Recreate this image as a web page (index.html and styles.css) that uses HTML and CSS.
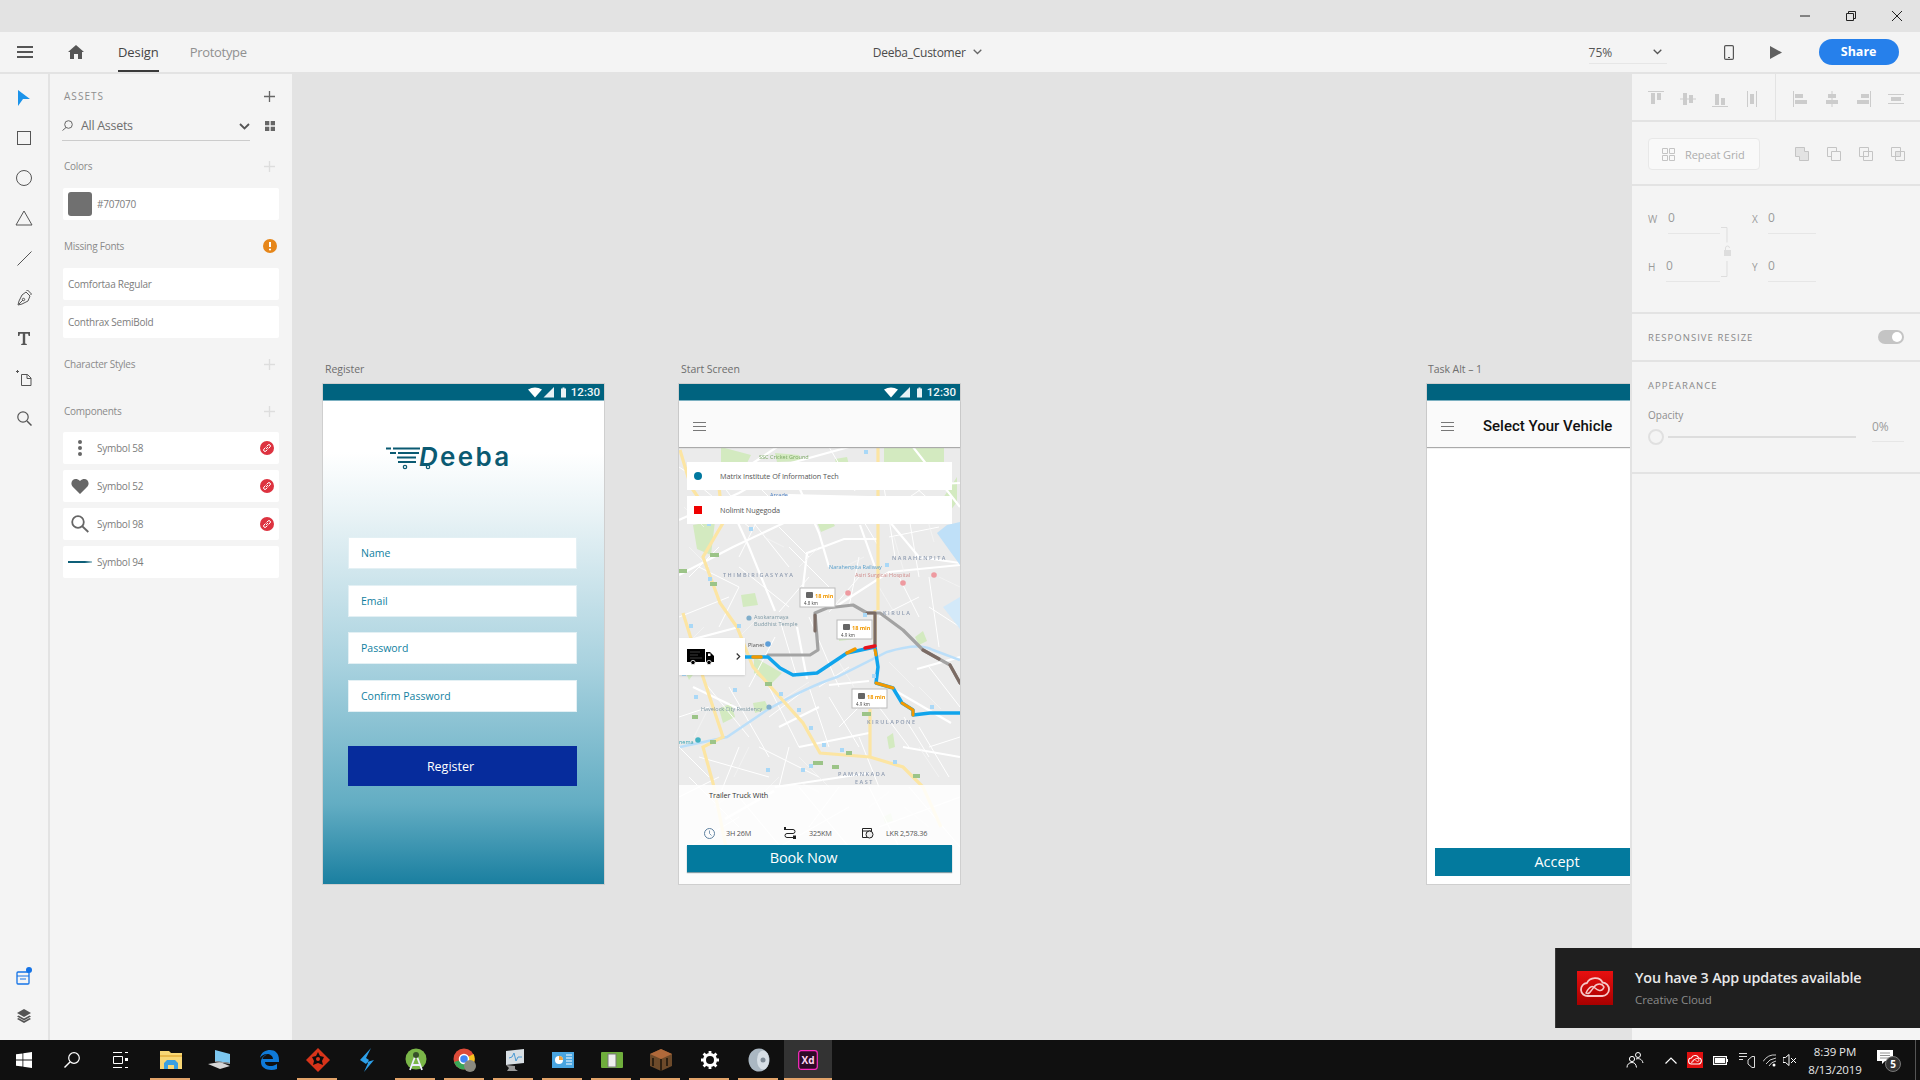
FILE: index.html
```html
<!DOCTYPE html>
<html lang="en">
<head>
<meta charset="utf-8">
<title>Deeba_Customer - Adobe XD</title>
<link rel="stylesheet" href="styles.css">
</head>
<body>
<div class="titlebar">
  <svg class="win-ctl" width="12" height="12" viewBox="0 0 12 12"><path d="M1 6h10" stroke="#222" fill="none"/></svg>
  <svg class="win-ctl" width="12" height="12" viewBox="0 0 12 12"><path d="M1.500 3.500h7v7h-7zM3.500 3.500v-2h7v7h-2" stroke="#222" fill="none"/></svg>
  <svg class="win-ctl" width="12" height="12" viewBox="0 0 12 12"><path d="M1 1l10 10M11 1L1 11" stroke="#222" fill="none"/></svg>
</div>
<header class="appbar">
  <svg class="ham" width="16" height="12" viewBox="0 0 16 12"><path d="M0 1h16M0 6h16M0 11h16" stroke="#555" stroke-width="2"/></svg>
  <svg class="home" width="16" height="14" viewBox="0 0 16 14"><path d="M8 0l8 7h-2v7H10V9H6v5H2V7H0z" fill="#555"/></svg>
  <div class="tab tab-on">Design</div>
  <div class="tab tab-off">Prototype</div>
  <div class="doc">Deeba_Customer<svg width="9" height="6" viewBox="0 0 9 6"><path d="M.7.7l3.800 3.800L8.300.7" stroke="#666" stroke-width="1.300" fill="none"/></svg></div>
  <div class="zoom"><span>75%</span><svg width="9" height="6" viewBox="0 0 9 6"><path d="M.7.7l3.800 3.800L8.300.7" stroke="#555" stroke-width="1.300" fill="none"/></svg></div>
  <svg class="phone" width="10" height="15" viewBox="0 0 10 15"><rect x=".6" y=".6" width="8.800" height="13.800" rx="1.200" fill="none" stroke="#555" stroke-width="1.200"/><rect x="4" y="12" width="2" height="1" fill="#555"/></svg>
  <svg class="play" width="12" height="13" viewBox="0 0 12 13"><path d="M0 0l12 6.500L0 13z" fill="#606060"/></svg>
  <div class="share">Share</div>
</header>
<div class="workspace">
  <nav class="tools">
    <svg width="12" height="16" viewBox="0 0 12 16"><path d="M0 0l12 9-7 0-5 7z" fill="#1b93ea"/></svg>
    <svg width="14" height="14" viewBox="0 0 14 14"><rect x=".5" y=".5" width="13" height="13" fill="none" stroke="#555"/></svg>
    <svg width="16" height="16" viewBox="0 0 16 16"><circle cx="8" cy="8" r="7.500" fill="none" stroke="#555"/></svg>
    <svg width="18" height="16" viewBox="0 0 18 16"><path d="M9 1l8 14H1z" fill="none" stroke="#555"/></svg>
    <svg width="15" height="15" viewBox="0 0 15 15"><path d="M.5 14.500l14-14" stroke="#555" fill="none"/></svg>
    <svg width="15" height="16" viewBox="0 0 15 16"><path d="M9 2l4 4-2 5-6 3-4 1 1-4 3-6zM9.500 1l1-1 4 4-1 1M2 14l4-4" fill="none" stroke="#555"/><circle cx="6.500" cy="9.500" r="1.200" fill="none" stroke="#555"/></svg>
    <svg width="12" height="13" viewBox="0 0 12 13"><path d="M0 0h12v4h-1.300L10 1.800H7.200v9.800l1.600.4V13H3.200v-1l1.600-.4V1.800H2L1.300 4H0z" fill="#555"/></svg>
    <svg width="16" height="16" viewBox="0 0 16 16"><path d="M5.500 4.500h6l3.500 3.500v7.500H5.500zM11 4.500v4h4M0 1.500h3M1.500 0v3" fill="none" stroke="#555"/></svg>
    <svg width="15" height="15" viewBox="0 0 15 15"><circle cx="6" cy="6" r="5.200" fill="none" stroke="#555" stroke-width="1.200"/><path d="M10 10l4.500 4.500" stroke="#555" stroke-width="1.500"/></svg>
    <svg class="tool-bottom" width="16" height="18" viewBox="0 0 16 18"><rect x="1" y="5" width="12" height="12" rx="1" fill="none" stroke="#1473e6" stroke-width="1.300"/><path d="M1 9h12M4 12h6" stroke="#1473e6"/><circle cx="13" cy="3" r="3" fill="#1473e6"/></svg>
    <svg class="tool-layers" width="14" height="14" viewBox="0 0 14 14"><path d="M7 0l7 4-7 4-7-4z" fill="#555"/><path d="M1.500 6.500L0 7.500l7 4 7-4-1.500-1-5.500 3zM1.500 9L0 10l7 4 7-4-1.500-1-5.500 3z" fill="#555"/></svg>
  </nav>
  <aside class="assets">
    <div class="assets-head"><span class="caps">ASSETS</span><svg width="11" height="11" viewBox="0 0 11 11"><path d="M5.500 0v11M0 5.500h11" stroke="#666" stroke-width="1.300"/></svg></div>
    <div class="search-row">
      <div class="search">
        <svg width="11" height="11" viewBox="0 0 11 11"><circle cx="6.500" cy="4.500" r="3.800" fill="none" stroke="#666"/><path d="M4 7.500L.5 10.500" stroke="#666"/></svg>
        <span>All Assets</span>
        <svg class="search-chev" width="11" height="7" viewBox="0 0 11 7"><path d="M1 1l4.500 4.500L10 1" stroke="#555" stroke-width="1.800" fill="none"/></svg>
      </div>
      <svg width="10" height="10" viewBox="0 0 10 10"><path d="M0 0h4.300v4.300H0zM5.700 0H10v4.300H5.700zM0 5.700h4.300V10H0zM5.700 5.700H10V10H5.700z" fill="#666"/></svg>
    </div>
    <div class="sec sec-colors"><span>Colors</span><svg width="11" height="11" viewBox="0 0 11 11"><path d="M5.500 0v11M0 5.500h11" stroke="#ddd" stroke-width="1.300"/></svg></div>
    <div class="card"><i class="swatch"></i><span>#707070</span></div>
    <div class="sec sec-fonts"><span>Missing Fonts</span><svg width="14" height="14" viewBox="0 0 14 14"><circle cx="7" cy="7" r="7" fill="#e68619"/><path d="M7 3v5" stroke="#fff" stroke-width="2"/><circle cx="7" cy="10.500" r="1.100" fill="#fff"/></svg></div>
    <div class="cards">
      <div class="card card-font">Comfortaa Regular</div>
      <div class="card card-font">Conthrax SemiBold</div>
    </div>
    <div class="sec sec-char"><span>Character Styles</span><svg width="11" height="11" viewBox="0 0 11 11"><path d="M5.500 0v11M0 5.500h11" stroke="#ddd" stroke-width="1.300"/></svg></div>
    <div class="sec sec-comp"><span>Components</span><svg width="11" height="11" viewBox="0 0 11 11"><path d="M5.500 0v11M0 5.500h11" stroke="#ddd" stroke-width="1.300"/></svg></div>
    <div class="cards">
      <div class="card"><span class="thumb"><svg width="4" height="16" viewBox="0 0 4 16"><circle cx="2" cy="2" r="2" fill="#666"/><circle cx="2" cy="8" r="2" fill="#666"/><circle cx="2" cy="14" r="2" fill="#666"/></svg></span><span>Symbol 58</span><svg class="link" width="14" height="14" viewBox="0 0 14 14"><circle cx="7" cy="7" r="7" fill="#dd3340"/><path d="M6 8l2-2M5.500 6.500L4 8a1.400 1.400 0 0 0 2 2l1.500-1.500M8.500 7.500L10 6a1.400 1.400 0 0 0-2-2L6.500 5.500" stroke="#fff" fill="none"/></svg></div>
      <div class="card"><span class="thumb"><svg width="18" height="16" viewBox="0 0 18 16"><path d="M9 16L1.500 8.500C-2 4 3.500-2 9 3c5.500-5 11 1 7.500 5.500z" fill="#666"/></svg></span><span>Symbol 52</span><svg class="link" width="14" height="14" viewBox="0 0 14 14"><circle cx="7" cy="7" r="7" fill="#dd3340"/><path d="M6 8l2-2M5.500 6.500L4 8a1.400 1.400 0 0 0 2 2l1.500-1.500M8.500 7.500L10 6a1.400 1.400 0 0 0-2-2L6.500 5.500" stroke="#fff" fill="none"/></svg></div>
      <div class="card"><span class="thumb"><svg width="18" height="18" viewBox="0 0 18 18"><circle cx="7" cy="7" r="5.800" fill="none" stroke="#666" stroke-width="1.800"/><path d="M11 11l6.300 6" stroke="#666" stroke-width="1.800"/></svg></span><span>Symbol 98</span><svg class="link" width="14" height="14" viewBox="0 0 14 14"><circle cx="7" cy="7" r="7" fill="#dd3340"/><path d="M6 8l2-2M5.500 6.500L4 8a1.400 1.400 0 0 0 2 2l1.500-1.500M8.500 7.500L10 6a1.400 1.400 0 0 0-2-2L6.500 5.500" stroke="#fff" fill="none"/></svg></div>
      <div class="card"><span class="thumb"><i class="thumb-line"></i></span><span>Symbol 94</span></div>
    </div>
  </aside>
  <main class="canvas">
    <div class="board-label board-label-a">Register</div>
    <div class="board-label board-label-b">Start Screen</div>
    <div class="board-label board-label-c">Task Alt – 1</div>

    <section class="board board-a">
      <div class="status"><svg width="40" height="11" viewBox="0 0 40 11"><path d="M0 2.500Q7-1.500 14 2.500L7 10.500z" fill="#fff"/><path d="M15.500 10.500L26 0v10.500z" fill="#e8f2f5"/><path d="M33 1.500h1.500v-1h2v1H38v9h-5z" fill="#e8f2f5"/></svg><span>12:30</span></div>
      <div class="logo">
        <svg class="logo-mark" width="48" height="24" viewBox="0 0 48 24"><path d="M0 2.500h5M7 2.500h27M4 7h6M12 7h21M11 11.500h19M12 16h18" stroke="#0b5a72" stroke-width="2" fill="none"/><circle cx="19" cy="21" r="1.700" fill="none" stroke="#0b5a72" stroke-width="1.200"/><circle cx="42" cy="21" r="1.700" fill="none" stroke="#0b5a72" stroke-width="1.200"/></svg>
        <span><em>D</em>eeba</span>
      </div>
      <div class="form">
        <div class="field">Name</div>
        <div class="field">Email</div>
        <div class="field">Password</div>
        <div class="field">Confirm Password</div>
        <div class="register">Register</div>
      </div>
    </section>

    <section class="board board-b">
      <div class="status"><svg width="40" height="11" viewBox="0 0 40 11"><path d="M0 2.500Q7-1.500 14 2.500L7 10.500z" fill="#fff"/><path d="M15.500 10.500L26 0v10.500z" fill="#e8f2f5"/><path d="M33 1.500h1.500v-1h2v1H38v9h-5z" fill="#e8f2f5"/></svg><span>12:30</span></div>
      <div class="nav"><svg width="13" height="9" viewBox="0 0 13 9"><path d="M0 .5h13M0 4.500h13M0 8.500h13" stroke="#777"/></svg></div>
      <div class="map">
        <svg class="map-art" width="281" height="437" viewBox="0 0 281 437">
          <rect width="281" height="437" fill="#ebebeb"/>
          <g fill="#d3eac0">
            <path d="M14 78l22-4-4 34-14-6zM136 70l12-5 8 14-14 6zM62 148l14-2 3 12-15 2zM205 0h60v24l-40 8-20-6zM258 60l20-30v25l-14 18zM75 210l14 8 14 8-12 12-16-12zM160 184l14-2 2 10-16 2zM74 256l12-2 4 8-14 4zM40 262l12-6 4 14-12 6zM236 190l8-6 4 10-8 4zM42 0l30 8-6 12-24-4zM96 6l24 2 2 6-24 1zM2 215l14 10-6 8zM156 12l12-2 2 8-12 2zM204 370l8-4 2 8-8 2zM208 290l6-4 2 14-6 2z"/>
          </g>
          <g fill="none" stroke="#fff" stroke-width="2.200">
            <path d="M0 73L60 46 112 16 170 0M44 76L110 48 190 50M0 128L54 100 130 64M124 140L128 106 165 92 199 92M156 160L210 125 281 118M50 56L70 100 96 164M120 40L140 86 150 120M205 68L240 110 281 116M181 78L196 120M62 24L98 0M234 0L281 60"/>
            <path d="M199 40L281 36M0 196L60 180M118 180L128 232M210 240L272 276M96 340L190 326M120 300L190 286M46 372L95 344M150 238L190 234M224 300L281 310M14 240L60 262M238 222L281 210M100 280L140 260"/>
          </g>
          <g fill="none" stroke="#fff" stroke-width="1">
            <path d="M10 30L70 80M30 20L60 60M150 0L176 44M170 50L200 100M205 40L216 110M216 60L260 30M230 70L240 130M250 130L260 200M130 170L160 240M100 170L118 230M20 120L60 140M60 120L110 160M0 170L50 150M80 70L60 110M110 100L150 140M180 110L170 160M220 130L240 170M250 160L281 180"/>
            <path d="M26 236L70 290M50 240L90 310M90 240L120 300M130 240L150 300M150 250L180 300M200 260L230 300M240 280L270 330M80 300L140 330M20 310L90 330M10 330L60 380M60 350L110 410M120 340L170 400M190 340L230 420M230 340L281 400M0 270L30 260M90 270L130 240M160 280L190 250M0 350L40 330M100 400L170 360M200 380L281 350M10 400L60 370"/>
            <path d="M0 20L30 40M70 30L100 60M100 80L130 110M150 60L190 70M210 90L260 80M60 140L40 180M20 190L50 220M96 190L70 240M140 240L170 220M200 170L240 150M150 165L180 130M250 220L281 260M225 270L250 310M180 290L200 340M110 300L100 340M60 300L40 350M0 300L30 330M160 340L130 380M250 300L281 290M70 70L110 120M130 130L100 165M40 100L10 130M236 40L270 70"/>
          </g>
          <g fill="none" stroke="#f7f7f7" stroke-width=".7">
            <path d="M5 60L25 80M10 100L30 120M85 90L105 100M120 120L140 100M165 120L185 110M215 90L225 125M245 60L255 95M260 130L281 140M200 140L215 165M160 215L175 240M210 215L235 240M240 240L262 262M100 255L130 235M70 300L55 330M120 310L150 340M30 260L15 290M5 200L25 180M60 190L80 170M260 330L240 300M210 345L190 360M140 345L120 335M80 350L100 330M35 360L55 345M225 360L250 380"/>
          </g>
          <path d="M1 300L48 290 88 263Q128 240 158 230L208 205Q240 195 254 203L281 213" fill="none" stroke="#bcdff9" stroke-width="2.500"/>
          <path d="M258 86L268 78 281 75V118L268 100z" fill="#bfe0f8"/>
          <path d="M264 160l17-10v32z" fill="#d3e9f9"/>
          <g fill="none" stroke="#fce5a3" stroke-width="3.200">
            <path d="M1 3L12 40 30 66 44 76 24 110 41 156 58 180 74 220 124 276 141 306 191 310 224 320 244 340 262 380"/>
            <path d="M199 0V163M196 163V200M191 262V310M4 166L24 230 44 290 24 300 34 336 51 420"/>
            <path d="M44 76L40 40"/>
          </g>
          <g fill="none" stroke-linejoin="round" stroke-linecap="round">
            <path d="M89 208H131L139 203 136 166 148 161 174 158 188 166H201L224 183 244 203 271 218 281 236" stroke="#a3a3a3" stroke-width="3.200"/>
            <path d="M136 168V184M188 166H196V198M244 203L260 212M271 218L281 236" stroke="#7b6b64" stroke-width="3.200"/>
            <path d="M66 210H89L101 221 114 228 138 226 168 206 196 200 199 220 197 236 214 241 223 256 234 263V268L251 266H281" stroke="#10a4ec" stroke-width="3.500"/>
            <path d="M74 210H82M168 206L176 202" stroke="#f29900" stroke-width="3.500"/>
            <path d="M186 201L196 199" stroke="#e8121b" stroke-width="3.500"/>
            <path d="M196 203L197 208M197 236L214 241M223 256L234 263V268" stroke="#f29900" stroke-width="3"/>
          </g>
          <g class="map-town">
            <text x="44" y="130">THIMBIRIGASYAYA</text>
            <text x="213" y="113">NARAHENPITA</text>
            <text x="188" y="277">KIRULAPONE</text>
            <text x="159" y="329">PAMANKADA</text>
            <text x="176" y="337">EAST</text>
            <text x="204" y="168">KIRULA</text>
          </g>
          <g class="map-poi">
            <text x="80" y="12" fill="#7ba764">SSC Cricket Ground</text>
            <text x="91" y="50" fill="#4a7fc4">Arcade</text>
            <text x="150" y="122" fill="#5aa0cc">Narahenpita Railway</text>
            <text x="176" y="130" fill="#d08d8c">Asiri Surgical Hospital</text>
            <text x="75" y="172" fill="#7f9aa6">Asokaramaya</text>
            <text x="75" y="179" fill="#7f9aa6">Buddhist Temple</text>
            <text x="22" y="264" fill="#7f9aa6">Havelock City Residency</text>
            <text x="69" y="200" fill="#555">Planet</text>
            <text x="0" y="297" fill="#35a3b3">nema</text>
          </g>
          <g fill="#a9d8f7"><rect x="54" y="241" width="4" height="4"/><rect x="100" y="245" width="4" height="4"/><rect x="118" y="261" width="4" height="4"/><rect x="130" y="279" width="4" height="4"/><rect x="143" y="296" width="4" height="4"/><rect x="161" y="301" width="4" height="4"/><rect x="214" y="313" width="4" height="4"/><rect x="87" y="321" width="4" height="4"/><rect x="122" y="321" width="4" height="4"/><rect x="130" y="317" width="4" height="4"/><rect x="251" y="258" width="4" height="4"/><rect x="184" y="166" width="4" height="4"/><rect x="193" y="227" width="4" height="4"/><rect x="3" y="225" width="4" height="4"/><rect x="10" y="177" width="4" height="4"/><rect x="58" y="177" width="4" height="4"/><rect x="15" y="248" width="4" height="4"/><rect x="28" y="75" width="4" height="4"/><rect x="70" y="80" width="4" height="4"/><rect x="185" y="3" width="4" height="4"/><rect x="206" y="116" width="4" height="4"/><rect x="29" y="130" width="4" height="4"/></g>
          <g fill="#9cc488"><rect x="31" y="106" width="9" height="4"/><rect x="0" y="122" width="8" height="4"/><rect x="31" y="135" width="7" height="4"/><rect x="86" y="235" width="7" height="4"/><rect x="183" y="265" width="9" height="4"/><rect x="13" y="268" width="6" height="4"/><rect x="31" y="293" width="6" height="4"/><rect x="167" y="304" width="6" height="4"/><rect x="134" y="314" width="10" height="4"/><rect x="153" y="318" width="7" height="4"/><rect x="234" y="327" width="7" height="4"/></g>
          <g fill="#ee9aa0"><circle cx="169" cy="146" r="2.800"/><circle cx="224" cy="136" r="2.800"/><circle cx="255" cy="128" r="2.800"/></g>
          <g fill="#80aecb"><circle cx="70" cy="171" r="2.600"/><circle cx="90" cy="260" r="2.600"/></g>
          <circle cx="89" cy="197" r="2.800" fill="#5d9ed8"/>
          <circle cx="19" cy="293" r="2.800" fill="#45b3c3"/>
          <g class="callout">
            <rect x="121" y="141" width="35" height="19" fill="#fff" stroke="#bbb"/><rect x="127" y="145" width="7" height="6" rx="1" fill="#666"/><text class="callout-time" x="136" y="151">18 min</text><text class="callout-km" x="125" y="158">4.8 km</text>
            <rect x="158" y="173" width="35" height="19" fill="#fff" stroke="#bbb"/><rect x="164" y="177" width="7" height="6" rx="1" fill="#666"/><text class="callout-time" x="173" y="183">18 min</text><text class="callout-km" x="162" y="190">4.9 km</text>
            <rect x="173" y="242" width="35" height="19" fill="#fff" stroke="#bbb"/><rect x="179" y="246" width="7" height="6" rx="1" fill="#666"/><text class="callout-time" x="188" y="252">18 min</text><text class="callout-km" x="177" y="259">4.9 km</text>
          </g>
        </svg>
        <div class="place place-a"><i class="dot"></i><span>Matrix Institute Of Information Tech</span></div>
        <div class="place place-b"><i class="sq"></i><span>Nolimit Nugegoda</span></div>
        <div class="truck">
          <svg width="27" height="16" viewBox="0 0 27 16"><path d="M0 0h18v13H0zM19 3h4l4 4v6h-8z" fill="#000"/><path d="M3 3h10M3 6h8M3 9h12" stroke="#666" stroke-width=".6"/><rect x="21" y="4.500" width="2.500" height="2.500" fill="#fff"/><circle cx="6" cy="13.500" r="2.200" fill="#000" stroke="#fff" stroke-width=".8"/><circle cx="22" cy="13.500" r="2.200" fill="#000" stroke="#fff" stroke-width=".8"/></svg>
          <svg class="truck-arrow" width="5" height="7" viewBox="0 0 5 7"><path d="M.7.5l3 3-3 3" stroke="#333" stroke-width="1.200" fill="none"/></svg>
        </div>
        <div class="sheet">
          <div class="trailer">Trailer Truck With</div>
          <div class="stats">
            <div class="stat stat-time"><svg width="11" height="11" viewBox="0 0 11 11"><circle cx="5.500" cy="5.500" r="5" fill="none" stroke="#5d7f9e"/><path d="M5.500 2.500v3l2 2" fill="none" stroke="#5d7f9e" stroke-width=".8"/></svg><span>3H 26M</span></div>
            <div class="stat stat-dist"><svg width="12" height="12" viewBox="0 0 12 12"><path d="M0 2.500h9a2 2 0 0 1 0 4H3a2 2 0 0 0 0 4h6" fill="none" stroke="#222"/><rect x="9" y="8.500" width="3" height="3.500" fill="#222"/><rect x="0" y="0" width="2" height="2" fill="#222"/></svg><span>325KM</span></div>
            <div class="stat stat-cost"><svg width="12" height="12" viewBox="0 0 12 12"><path d="M.5 1.500h9v9H.500zM.5 4h9" fill="none" stroke="#222"/><circle cx="7.500" cy="7.500" r="3.500" fill="#eee" stroke="#222"/></svg><span>LKR 2,578.36</span></div>
          </div>
          <div class="book">Book Now</div>
        </div>
      </div>
    </section>

    <section class="board board-c">
      <div class="status"></div>
      <div class="nav nav-c"><svg width="13" height="9" viewBox="0 0 13 9"><path d="M0 .5h13M0 4.500h13M0 8.500h13" stroke="#777"/></svg><span>Select Your Vehicle</span></div>
      <div class="vehicle-body"><div class="accept">Accept</div></div>
    </section>
  </main>
  <aside class="inspector">
    <div class="panel panel-align">
      <div class="align-group align-left">
        <svg width="16" height="16" viewBox="0 0 16 16"><path d="M0 .5h16" stroke="#ccc"/><path d="M3 2h4v11H3zM9 2h4v7H9z" fill="#ccc"/></svg>
        <svg width="16" height="14" viewBox="0 0 16 14"><path d="M0 7h16" stroke="#ccc"/><path d="M3 1h4v12H3zM9 3h4v8H9z" fill="#ccc"/></svg>
        <svg width="16" height="16" viewBox="0 0 16 16"><path d="M0 15.500h16" stroke="#ccc"/><path d="M3 3h4v11H3zM9 7h4v7H9z" fill="#ccc"/></svg>
        <svg width="10" height="16" viewBox="0 0 10 16"><path d="M.5 0v16M9.500 0v16" stroke="#ccc"/><path d="M3 3h4v10H3z" fill="#ccc"/></svg>
      </div>
      <div class="align-group align-right">
        <svg width="14" height="16" viewBox="0 0 14 16"><path d="M.5 0v16" stroke="#ccc"/><path d="M2 3h8v4H2zM2 9h12v4H2z" fill="#ccc"/></svg>
        <svg width="12" height="16" viewBox="0 0 12 16"><path d="M6 0v16" stroke="#ccc"/><path d="M2 3h8v4H2zM0 9h12v4H0z" fill="#ccc"/></svg>
        <svg width="14" height="16" viewBox="0 0 14 16"><path d="M13.500 0v16" stroke="#ccc"/><path d="M4 3h8v4H4zM0 9h12v4H0z" fill="#ccc"/></svg>
        <svg width="16" height="10" viewBox="0 0 16 10"><path d="M0 .5h16M0 9.500h16" stroke="#ccc"/><path d="M3 3h10v4H3z" fill="#ccc"/></svg>
      </div>
    </div>
    <div class="panel panel-grid">
      <div class="repeat"><svg width="13" height="13" viewBox="0 0 13 13"><path d="M.5.500h5v5h-5zM7.500.500h5v5h-5zM.5 7.500h5v5h-5zM7.500 7.500h5v5h-5z" fill="none" stroke="#c4c4c4"/></svg><span>Repeat Grid</span></div>
      <div class="path-ops">
        <svg width="14" height="14" viewBox="0 0 14 14"><path d="M.5.500h9v4h4v9h-9v-4h-4z" fill="#e3e3e3" stroke="#c4c4c4"/></svg>
        <svg width="14" height="14" viewBox="0 0 14 14"><path d="M4.500 9.500h-4v-9h9v4" fill="none" stroke="#c4c4c4"/><path d="M4.500 4.500h9v9h-9z" fill="none" stroke="#c4c4c4"/></svg>
        <svg width="14" height="14" viewBox="0 0 14 14"><path d="M.5.500h9v9h-9zM4.500 4.500h9v9h-9z" fill="none" stroke="#c4c4c4"/></svg>
        <svg width="14" height="14" viewBox="0 0 14 14"><path d="M4.500 4.500h5v5h-5z" fill="#e3e3e3"/><path d="M.5.500h9v9h-9zM4.500 4.500h9v9h-9z" fill="none" stroke="#c4c4c4"/></svg>
      </div>
    </div>
    <div class="panel panel-dims">
      <div class="dim dim-w"><label>W</label><span>0</span></div>
      <svg class="bracket" width="12" height="50" viewBox="0 0 12 50"><path d="M1 .5h6v15M7 34v15.500H1" fill="none" stroke="#ddd"/><path d="M4 23h7v6H4z" fill="#ddd"/><path d="M5.500 23v-2a2 2 0 0 1 4 0" fill="none" stroke="#ddd"/></svg>
      <div class="dim dim-x"><label>X</label><span>0</span></div>
      <div class="dim dim-h"><label>H</label><span>0</span></div>
      <div class="dim dim-x"><label>Y</label><span>0</span></div>
    </div>
    <div class="panel panel-resize"><span class="caps caps-wide">RESPONSIVE RESIZE</span><div class="toggle"><i></i></div></div>
    <div class="panel panel-appear">
      <div class="caps caps-wide">APPEARANCE</div>
      <div class="opacity-label">Opacity</div>
      <div class="opacity-row"><i class="knob"></i><i class="track"></i><span class="pct">0%</span></div>
    </div>
  </aside>
</div>
<footer class="taskbar">
  <div class="tb"><svg width="16" height="16" viewBox="0 0 16 16"><path d="M0 2.300L6.500 1.400v6.200H0zM7.300 1.300L16 0v7.600H7.300zM0 8.400h6.500v6.200L0 13.700zM7.300 8.400H16V16l-8.700-1.200z" fill="#fff"/></svg></div>
  <div class="tb"><svg width="16" height="16" viewBox="0 0 16 16"><circle cx="10" cy="6" r="5.300" fill="none" stroke="#fff" stroke-width="1.200"/><path d="M6 10l-5.500 5.500" stroke="#fff" stroke-width="1.400"/></svg></div>
  <div class="tb"><svg width="16" height="16" viewBox="0 0 16 16"><path d="M1 .5h9M1 15.500h9M1.500 4.500h9v7h-9zM13 .5h3M13 15.500h3" stroke="#fff" fill="none"/><rect x="13" y="6" width="3" height="3" fill="#fff"/></svg></div>
  <div class="tb tb-app tb-first tb-run"><svg width="22" height="18" viewBox="0 0 22 18"><path d="M0 0h9l2 2h11v16H0z" fill="#f8d775"/><path d="M0 4h22v2H0z" fill="#e8b84a"/><path d="M4 18v-6l3-3h8l3 3v6h-4v-4H8v4z" fill="#3aa0e0"/></svg></div>
  <div class="tb tb-app"><svg width="24" height="20" viewBox="0 0 24 20"><path d="M7 0l15 4v9L7 11z" fill="#7cc7f0"/><path d="M0 14l12-2 10 4-10 3z" fill="#d6d6d6"/><path d="M7 11l15 2v1L7 12z" fill="#aaa"/></svg></div>
  <div class="tb tb-app"><svg width="20" height="20" viewBox="0 0 20 20"><path d="M1 8C2 2 7 0 11 0c5 0 9 3 9 10v2H6c0 5 8 5 12 2v5c-6 2-16 1-16-7 0-4 3-7 7-8-3 1-5 3-5.500 5H14c0-3-3-5-6-5-3 0-6 2-7 4z" fill="#0f7ad8"/></svg></div>
  <div class="tb tb-app tb-run"><svg width="24" height="24" viewBox="0 0 24 24"><path d="M12 0l12 12-12 12L0 12z" fill="#d8341a"/><path d="M12 4l2 4 4 1-2 4 1 4-5-2-5 2 1-4-2-4 4-1z" fill="#0c0c0c"/><circle cx="12" cy="11" r="2" fill="#d8341a"/></svg></div>
  <div class="tb tb-app"><svg width="14" height="24" viewBox="0 0 14 24"><path d="M11 0L0 12l6 4 3-4-3-2zM7 14l7-2-10 12 4-9z" fill="#2d9fe8"/></svg></div>
  <div class="tb tb-app tb-run"><svg width="22" height="24" viewBox="0 0 22 24"><circle cx="11" cy="11" r="10.500" fill="#7ab648"/><path d="M11 6l-6 16M11 6l6 16M7 17h8" stroke="#eef" stroke-width="1.800" fill="none"/><circle cx="11" cy="7" r="3" fill="#37512a"/></svg></div>
  <div class="tb tb-app tb-run"><svg width="24" height="24" viewBox="0 0 24 24"><circle cx="11" cy="11" r="10.500" fill="#dd4b39"/><path d="M11 11L20.500 6a10.500 10.500 0 0 1-6 15z" fill="#f7c11e"/><path d="M11 11L1 14a10.500 10.500 0 0 0 13 7z" fill="#3aa757"/><circle cx="11" cy="11" r="4.500" fill="#4285f4" stroke="#fff" stroke-width="1.500"/><circle cx="17" cy="18" r="6" fill="#8a8a80"/></svg></div>
  <div class="tb tb-app tb-run"><svg width="24" height="22" viewBox="0 0 24 22"><path d="M4 2l18-2v14L4 16z" fill="#d8dfe4"/><path d="M7 9l3-1 2-4 2 8 2-4h4" fill="none" stroke="#4a9ad4"/><path d="M4 16l9 1v3l3 2H5l2-3z" fill="#999"/></svg></div>
  <div class="tb tb-app tb-run"><svg width="22" height="16" viewBox="0 0 22 16"><rect width="22" height="16" fill="#49a5e0"/><circle cx="7" cy="8" r="4" fill="#fff"/><path d="M7 8V4a4 4 0 0 1 4 4z" fill="#f2a33a"/><path d="M14 3h6M14 6h6M14 9h6M14 12h6" stroke="#fff"/></svg></div>
  <div class="tb tb-app tb-run"><svg width="22" height="16" viewBox="0 0 22 16"><rect width="22" height="16" rx="1" fill="#6fae3c"/><rect x="7" y="2" width="8" height="13" fill="#eee" stroke="#777"/></svg></div>
  <div class="tb tb-app tb-run"><svg width="22" height="22" viewBox="0 0 22 22"><path d="M11 0l11 5v12l-11 5L0 17V5z" fill="#6d4a2a"/><path d="M11 0l11 5-11 5L0 5z" fill="#b0693a"/><path d="M11 10v12M3 9v8M17 9v8" stroke="#2f2112" stroke-width="2"/></svg></div>
  <div class="tb tb-app tb-run"><svg width="18" height="18" viewBox="0 0 18 18"><circle cx="9" cy="9" r="5.500" fill="none" stroke="#fff" stroke-width="3"/><path d="M9 0v3M9 15v3M0 9h3M15 9h3M2.600 2.600l2.100 2.100M13.300 13.300l2.100 2.100M2.600 15.400l2.100-2.100M13.300 4.700l2.100-2.100" stroke="#fff" stroke-width="2.800"/></svg></div>
  <div class="tb tb-app tb-run"><svg width="22" height="24" viewBox="0 0 22 24"><ellipse cx="11" cy="12" rx="10.500" ry="11.500" fill="#aab7c2"/><ellipse cx="15" cy="12" rx="6" ry="9.500" fill="#d6dee5"/><circle cx="15" cy="12" r="2.500" fill="#7e8b96"/></svg></div>
  <div class="tb tb-app tb-xd"><svg width="20" height="20" viewBox="0 0 20 20"><rect x=".7" y=".7" width="18.600" height="18.600" rx="2.500" fill="#2e0a26" stroke="#ff2bc2" stroke-width="1.200"/><text class="xd-text" x="10" y="14" text-anchor="middle">Xd</text></svg></div>
  <div class="tray">
    <div class="ti ti-people"><svg width="18" height="16" viewBox="0 0 18 16"><circle cx="6" cy="7" r="2.600" fill="none" stroke="#fff"/><path d="M1 15.500c0-3 2-5 5-5s4 2 4.500 5" fill="none" stroke="#fff"/><circle cx="12" cy="3" r="2.500" fill="none" stroke="#fff"/><path d="M10 7c3-1 6 0 7 4" fill="none" stroke="#fff"/></svg></div>
    <div class="ti ti-caret"><svg width="12" height="7" viewBox="0 0 12 7"><path d="M.5 6.500L6 1l5.500 5.500" fill="none" stroke="#fff" stroke-width="1.200"/></svg></div>
    <div class="ti ti-cc"><svg width="16" height="16" viewBox="0 0 16 16"><rect width="16" height="16" fill="#e01010"/><path d="M4.800 12a3 3 0 0 1-.4-6C5.800 2.500 10.800 3 11.500 6a3 3 0 0 1-.3 6z" fill="none" stroke="#fff" stroke-width="1.100"/><path d="M4.500 10.500c2-4 3.500-3 4.500-2s3 2 3-1c-1-1.500-3-1.500-4.500 0s-2.500 4-3 3z" fill="none" stroke="#fff" stroke-width=".8"/></svg></div>
    <div class="ti ti-batt"><svg width="15" height="9" viewBox="0 0 15 9"><rect x=".6" y=".6" width="12.800" height="7.800" fill="none" stroke="#fff" stroke-width="1.200"/><rect x="2" y="2" width="10" height="5" fill="#fff"/><rect x="14" y="3" width="1" height="3" fill="#fff"/></svg></div>
    <div class="ti ti-action"><svg width="16" height="15" viewBox="0 0 16 15"><path d="M0 .5h8M0 3.500h8M0 6.500h4M9 7l4-3.500h2.500v11H13L9 11z" fill="none" stroke="#ddd"/></svg></div>
    <div class="ti ti-wifi"><svg width="13" height="13" viewBox="0 0 13 13"><path d="M0 7.500Q5 0 13 1M3 10Q6 5 13 4M6 12Q8 8 13 7" fill="none" stroke="#ccc"/><circle cx="11" cy="11" r="1.500" fill="#fff"/></svg></div>
    <div class="ti ti-mute"><svg width="14" height="12" viewBox="0 0 14 12"><path d="M0 3.500h2.500L6 .5v11l-3.500-3H0zM8 4l5 5M13 4l-5 5" fill="none" stroke="#fff"/></svg></div>
    <div class="clock"><span>8:39 PM</span><span>8/13/2019</span></div>
    <div class="ti ti-notif"><svg width="24" height="24" viewBox="0 0 24 24"><path d="M0 2h16v11H8l-3 3v-3H0z" fill="#fff"/><path d="M3 5h10M3 7.500h10M3 10h10" stroke="#777" stroke-width=".8"/><circle cx="16" cy="16" r="7.500" fill="#333" stroke="#777"/><text class="notif-num" x="16" y="20" text-anchor="middle">5</text></svg></div>
    <i class="tray-edge"></i>
  </div>
</footer>
<div class="toast">
  <svg width="36" height="34" viewBox="0 0 36 34"><defs><linearGradient id="ccg" x1="0" y1="0" x2="0" y2="1"><stop offset="0" stop-color="#e81010"/><stop offset="1" stop-color="#a80000"/></linearGradient></defs><rect width="36" height="34" fill="url(#ccg)"/><path d="M11 25a6.500 6.500 0 0 1-1-13c2.500-6 13-7 15.500-.5A6.700 6.700 0 0 1 25 25z" fill="none" stroke="#f6c8c8" stroke-width="1.800"/><path d="M9 22c4-8 7-7 9-5s7 5 9-1c-2-4-7-4-10 0s-5 8-8 6z" fill="none" stroke="#f6c8c8" stroke-width="1.500"/></svg>
  <div class="toast-text"><strong>You have 3 App updates available</strong><span>Creative Cloud</span></div>
</div>
</body>
</html>
```

FILE: styles.css
```css
* { box-sizing: border-box; }
html, body { margin: 0; height: 100%; }
body {
  width: 1920px; height: 1080px; overflow: hidden; position: relative;
  display: flex; flex-direction: column;
  background: #e3e3e3; color: #707070;
  font: 12px "Open Sans", "Noto Sans", sans-serif;
}
svg { display: block; flex: none; }
i { display: block; }

.titlebar { height: 32px; display: flex; justify-content: flex-end; align-items: center; padding-right: 17px; gap: 34px; background: #e3e3e3; }

.appbar { height: 42px; display: flex; align-items: center; background: #f4f4f4; border-bottom: 2px solid #e3e3e3; }
.ham { margin-left: 17px; }
.home { margin-left: 35px; }
.tab { height: 40px; line-height: 40px; margin-left: 34px; font-size: 13px; color: #909090; letter-spacing: -.1px; }
.tab-on { color: #444; border-bottom: 2px solid #3a3a3a; }
.tab-off { margin-left: 31px; letter-spacing: -.3px; }
.doc { display: flex; align-items: center; gap: 7px; margin-left: 626px; font-size: 12px; color: #4b4b4b; letter-spacing: -.25px; }
.zoom { display: flex; align-items: center; justify-content: space-between; margin-left: 607px; width: 78px; height: 23px; padding-right: 5px; margin-top: 1px; font-size: 12px; color: #555; border-bottom: 1px solid #e6e6e6; }
.phone { margin-left: 57px; }
.play { margin-left: 36px; }
.share { margin-left: 37px; width: 80px; height: 26px; line-height: 26px; border-radius: 13px; background: #2680eb; color: #fff; font-size: 12.500px; font-weight: 700; text-align: center; }

.workspace { flex: 1; display: flex; min-height: 0; }
.tools { width: 50px; padding: 4px 0; display: grid; grid-template-rows: repeat(9, 40px) 1fr 40px 40px; justify-items: center; align-items: center; background: #f4f4f4; border-right: 2px solid #e3e3e3; }
.tool-bottom { grid-row: 11; }
.tool-layers { grid-row: 12; }

.assets { width: 242px; background: #f4f4f4; padding: 0 13px; display: flex; flex-direction: column; }
.assets-head { height: 44px; display: flex; align-items: center; justify-content: space-between; padding: 0 4px 0 1px; }
.caps { font-size: 10px; letter-spacing: 1.050px; color: #8e8e8e; }
.search-row { height: 23px; display: flex; justify-content: space-between; padding-right: 4px; margin-left: -1px; align-items: flex-start; }
.search-row > svg { margin-top: 3px; }
.search { width: 188px; height: 23px; display: flex; align-items: flex-start; gap: 8px; border-bottom: 1px solid #ccc; font-size: 12.500px; color: #6f6f6f; letter-spacing: -.3px; }
.search > svg { margin-top: 2px; }
.search span { line-height: 15px; }
.search > .search-chev { margin-left: auto; margin-top: 5px; }
.sec { height: 20px; display: flex; align-items: center; justify-content: space-between; padding: 0 4px 0 1px; font-size: 10px; color: #8a8a8a; letter-spacing: -.25px; }
.sec-colors { margin-top: 15px; margin-bottom: 12px; }
.sec-fonts { margin-top: 16px; margin-bottom: 12px; padding-right: 2px; }
.sec-char { margin-top: 16px; }
.sec-comp { margin-top: 27px; margin-bottom: 11px; }
.cards { display: flex; flex-direction: column; gap: 6px; }
.card { height: 32px; flex: none; display: flex; align-items: center; background: #fff; border-radius: 2px; font-size: 10px; color: #7d7d7d; letter-spacing: -.25px; padding-right: 5px; }
.card-font { padding-left: 5px; }
.swatch { width: 24px; height: 24px; margin: 0 5px; border-radius: 3px; background: #707070; }
.thumb { width: 34px; display: flex; justify-content: center; }
.thumb-line { width: 24px; height: 2px; background: linear-gradient(90deg, #0e5f78 70%, #a9c9d2); }
.link { margin-left: auto; }

.canvas { flex: 1; position: relative; overflow: hidden; background: #e3e3e3; margin-right: 2px; }
.board-label { position: absolute; top: 288px; font-size: 10.500px; color: #6e6e6e; letter-spacing: -.05px; }
.board-label-a { left: 33px; }
.board-label-b { left: 389px; }
.board-label-c { left: 1136px; }
.board { position: absolute; top: 310px; width: 281px; height: 500px; display: flex; flex-direction: column; outline: 1px solid #cfcfcf; background: #fff; }
.board-a { left: 31px; background: linear-gradient(180deg, #fff 0 68px, #e9f3f6 130px, #a9d2df 280px, #63adc3 420px, #1a7fa0 500px); }
.board-b { left: 387px; }
.board-c { left: 1135px; width: 220px; }
.status { height: 17px; flex: none; background: #00637f; display: flex; align-items: center; justify-content: flex-end; gap: 3px; padding-right: 4px; border-bottom: 1px solid #7bb0c1; }
.status span { font: 500 11.500px Roboto, sans-serif; color: #f0f6f8; }
.logo { display: flex; align-items: flex-start; margin: 45px 0 0 63px; height: 26px; }
.logo-mark { margin-right: -15px; }
.logo span { font: 600 26px/21px Inter, "Open Sans", sans-serif; color: #0b5a72; letter-spacing: 2.300px; }
.logo em { font-style: italic; }
.form { margin: 65px 0 0 25px; width: 229px; display: flex; flex-direction: column; gap: 15.500px; }
.field { height: 32px; background: #fff; border: 1px solid #e3f0f4; padding-left: 12px; line-height: 31px; font-size: 10.500px; color: #117f9f; }
.register { height: 40px; margin-top: 18.500px; background: #062c9c; color: #fff; line-height: 42px; text-align: center; font-size: 12.500px; padding-right: 24px; }
.nav { height: 46px; flex: none; display: flex; align-items: center; padding: 4px 0 0 14px; background: #fafafa; box-shadow: 0 1px 1px #aaa; position: relative; z-index: 1; }
.map { position: relative; flex: 1; overflow: hidden; background: #ebebeb; }
.map-art { filter: blur(.4px); }
.map-town text { font: 600 5.500px "Open Sans", sans-serif; letter-spacing: 1.500px; fill: #8e9bb0; }
.map-poi text { font: 5.500px "Open Sans", sans-serif; }
.callout-time { font: 700 5.500px "Open Sans", sans-serif; fill: #f29900; }
.callout-km { font: 4.500px "Open Sans", sans-serif; fill: #444; }
.place { position: absolute; left: 8px; width: 265px; height: 28px; background: #fff; display: flex; align-items: center; font-size: 7.300px; color: #555; letter-spacing: -.1px; }
.place-a { top: 15px; }
.place-b { top: 49px; }
.dot { width: 8px; height: 8px; border-radius: 50%; background: #00789f; margin: 0 18px 0 7px; }
.sq { width: 8px; height: 8px; background: #ef0000; margin: 0 18px 0 7px; }
.truck { position: absolute; left: 0; top: 191px; width: 66px; height: 37px; background: #fff; display: flex; align-items: center; padding-left: 8px; box-shadow: 0 1px 2px rgba(0,0,0,.12); }
.truck-arrow { margin-left: 22px; }
.sheet { position: absolute; left: 0; right: 0; top: 338px; height: 99px; background: rgba(255,255,255,.86); }
.trailer { margin: 5px 0 0 30px; font-size: 7.300px; line-height: 11px; color: #333; letter-spacing: -.05px; }
.stats { display: flex; align-items: center; margin-top: 25px; height: 14px; font-size: 7.300px; color: #555; letter-spacing: -.2px; }
.stat { display: flex; align-items: center; gap: 11px; }
.stat-time { margin-left: 25px; width: 80px; }
.stat-dist { width: 78px; gap: 13px; }
.stat-cost { gap: 12px; }
.book { margin: 5px 0 0 8px; width: 265px; height: 27px; line-height: 26px; text-align: center; background: #037a9e; color: #fff; font-size: 14.500px; letter-spacing: -.2px; box-shadow: 0 1px 1px rgba(0,60,80,.5); padding-right: 32px; }
.nav-c span { margin-left: 29px; font: 500 15px Roboto, sans-serif; color: #111; }
.vehicle-body { flex: 1; position: relative; }
.accept { position: absolute; left: 8px; top: 401px; width: 212px; height: 28px; background: #037a9e; color: #fff; line-height: 28px; text-align: center; font-size: 14.500px; padding-left: 32px; }

.inspector { width: 288px; background: #f4f4f4; }
.panel { border-bottom: 2px solid #e3e3e3; }
.panel-align { height: 48px; display: flex; }
.align-group { display: grid; grid-template-columns: repeat(4, 32px); justify-items: center; align-items: center; height: 46px; padding: 3px 0 0 8px; }
.align-left { width: 144px; border-right: 1px solid #e3e3e3; }
.panel-grid { height: 64px; display: flex; align-items: flex-start; padding: 16px 0 0 16px; }
.repeat { width: 112px; height: 32px; display: flex; align-items: center; gap: 10px; padding-left: 13px; background: #f9f9f9; border: 1px solid #e8e8e8; border-radius: 4px; font-size: 11px; color: #adadad; letter-spacing: -.1px; }
.path-ops { display: flex; gap: 18px; margin: 9px 0 0 35px; }
.panel-dims { height: 128px; display: grid; grid-template-columns: 72px 32px 64px; grid-template-rows: 29px 29px; row-gap: 19px; padding: 19px 0 0 16px; align-content: start; }
.dim { display: flex; align-items: flex-end; }
.dim label { width: 20px; font-size: 10px; color: #9b9b9b; padding-bottom: 8px; }
.dim span { flex: 1; border-bottom: 1px solid #e6e6e6; height: 29px; font-size: 12px; color: #9b9b9b; line-height: 26px; }
.dim-h label { width: 18px; }
.dim-x { width: 64px; }
.dim-x label { width: 16px; }
.bracket { grid-row: 1 / span 2; grid-column: 2; margin-top: 22px; }
.panel-resize { height: 48px; display: flex; align-items: center; justify-content: space-between; padding: 0 16px; }
.caps-wide { font-size: 9.500px; letter-spacing: 1.050px; color: #8a8a8a; }
.toggle { width: 26px; height: 14px; padding: 2px 2px 2px 14px; border-radius: 7px; background: #c4c4c4; }
.toggle i { width: 10px; height: 10px; border-radius: 50%; background: #fff; }
.panel-appear { height: 112px; padding: 17px 16px 0; }
.opacity-label { margin-top: 16px; font-size: 10px; color: #8e8e8e; line-height: 14px; }
.opacity-row { display: flex; align-items: center; height: 26px; margin-top: 2px; }
.knob { width: 16px; height: 16px; border: 2px solid #e0e0e0; border-radius: 50%; }
.track { width: 188px; height: 2px; background: #ddd; margin: 0 16px 0 4px; }
.pct { width: 32px; height: 26px; margin-top: -16px; border-bottom: 1px solid #e6e6e6; font-size: 12px; color: #9b9b9b; line-height: 22px; }

.taskbar { height: 40px; flex: none; display: flex; align-items: center; background: #101010; }
.tb { width: 48px; height: 40px; flex: none; display: flex; align-items: center; justify-content: center; position: relative; }
.tb-app { width: 49px; }
.tb-first { margin-left: 2px; }
.tb-run::after { content: ""; position: absolute; left: 4px; right: 5px; bottom: 0; height: 2px; background: #e2a369; }
.tb-xd { width: 48px; margin-left: 1px; background: #333; }
.tb-xd::after { content: ""; position: absolute; left: 0; right: 0; bottom: 0; height: 2px; background: #e2a369; }
.xd-text { font: 700 10px "Open Sans", sans-serif; fill: #ffd5f2; }
.tray { margin-left: auto; width: 300px; height: 40px; display: flex; align-items: center; flex: none; }
.ti { height: 40px; display: flex; align-items: center; justify-content: center; flex: none; }
.ti-people { width: 30px; margin-right: 9px; }
.ti-caret, .ti-cc { width: 24px; }
.ti-batt { width: 26px; }
.ti-action { width: 28px; }
.ti-wifi { width: 17px; }
.ti-mute { width: 24px; }
.ti-notif { width: 42px; }
.clock { width: 66px; display: flex; flex-direction: column; align-items: center; gap: 1px; font-size: 11.500px; line-height: 17px; color: #e8e8e8; letter-spacing: -.1px; }
.notif-num { font: 700 10px "Open Sans", sans-serif; fill: #fff; }
.tray-edge { width: 1px; height: 40px; margin-left: 5px; background: #555; }

.toast { position: absolute; left: 1555px; top: 948px; width: 365px; height: 80px; background: #1f1f1f; border-left: 1px solid #3a3a3a; display: flex; align-items: center; padding-left: 21px; gap: 22px; }
.toast-text { display: flex; flex-direction: column; gap: 4px; }
.toast-text strong { font-size: 14.300px; font-weight: 600; color: #e8e8e8; letter-spacing: -.15px; line-height: 20px; }
.toast-text span { font-size: 11.500px; color: #8a8a8a; line-height: 16px; letter-spacing: -.1px; }
```
